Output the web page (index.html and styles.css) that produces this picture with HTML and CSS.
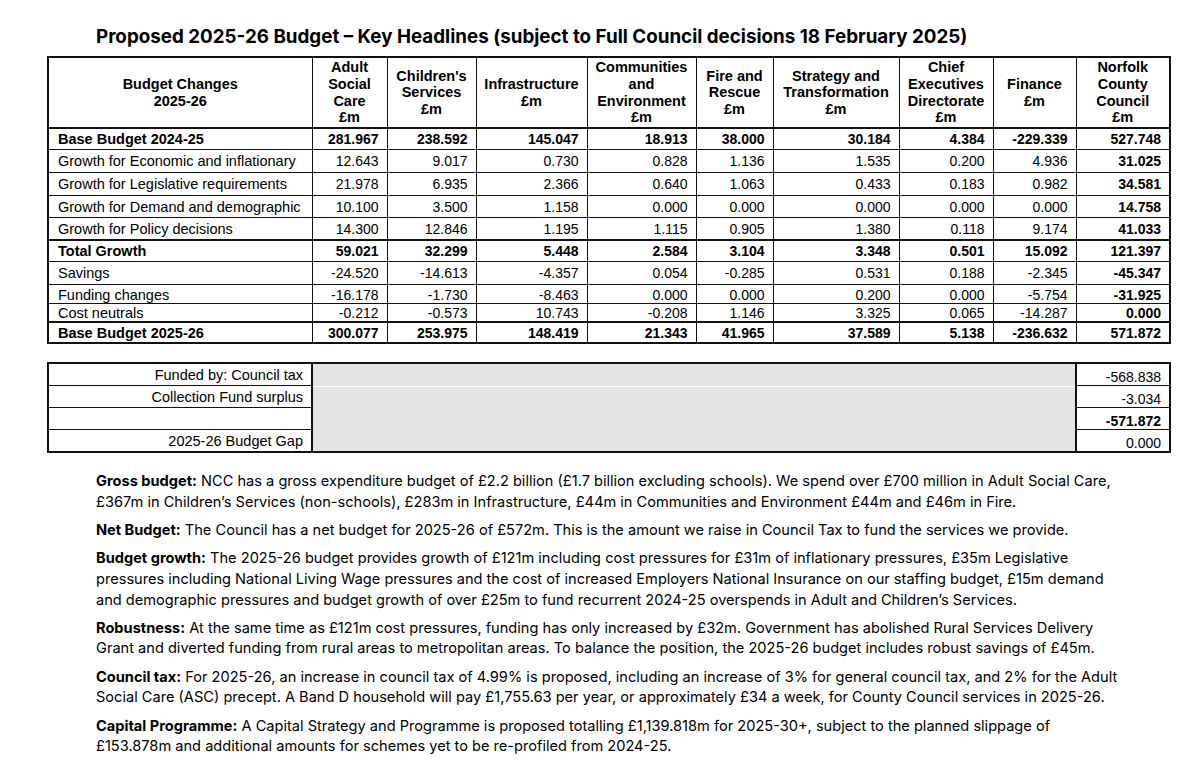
FILE: index.html
```html
<!DOCTYPE html>
<html lang="en">
<head>
<meta charset="utf-8">
<title>Proposed 2025-26 Budget – Key Headlines</title>
<link rel="stylesheet" href="styles.css">
</head>
<body>
<div class="page">
  <h1 class="title">Proposed 2025-26 Budget – Key Headlines (subject to Full Council decisions 18 February 2025)</h1>

  <table class="budget">
    <colgroup>
      <col class="c-label">
      <col class="c-asc">
      <col class="c-cs">
      <col class="c-inf">
      <col class="c-ce">
      <col class="c-fr">
      <col class="c-st">
      <col class="c-cx">
      <col class="c-fin">
      <col class="c-ncc">
    </colgroup>
    <thead>
      <tr>
        <th>Budget Changes<br>2025-26</th>
        <th>Adult<br>Social<br>Care<br>£m</th>
        <th>Children's<br>Services<br>£m</th>
        <th>Infrastructure<br>£m</th>
        <th>Communities<br>and<br>Environment<br>£m</th>
        <th>Fire and<br>Rescue<br>£m</th>
        <th>Strategy and<br>Transformation<br>£m</th>
        <th>Chief<br>Executives<br>Directorate<br>£m</th>
        <th>Finance<br>£m</th>
        <th>Norfolk<br>County<br>Council<br>£m</th>
      </tr>
    </thead>
    <tbody>
      <tr class="row bold h-base">
        <td>Base Budget 2024-25</td><td>281.967</td><td>238.592</td><td>145.047</td><td>18.913</td><td>38.000</td><td>30.184</td><td>4.384</td><td>-229.339</td><td>527.748</td>
      </tr>
      <tr class="row h23">
        <td>Growth for Economic and inflationary</td><td>12.643</td><td>9.017</td><td>0.730</td><td>0.828</td><td>1.136</td><td>1.535</td><td>0.200</td><td>4.936</td><td class="tot">31.025</td>
      </tr>
      <tr class="row h23">
        <td>Growth for Legislative requirements</td><td>21.978</td><td>6.935</td><td>2.366</td><td>0.640</td><td>1.063</td><td>0.433</td><td>0.183</td><td>0.982</td><td class="tot">34.581</td>
      </tr>
      <tr class="row h22">
        <td>Growth for Demand and demographic</td><td>10.100</td><td>3.500</td><td>1.158</td><td>0.000</td><td>0.000</td><td>0.000</td><td>0.000</td><td>0.000</td><td class="tot">14.758</td>
      </tr>
      <tr class="row h22">
        <td>Growth for Policy decisions</td><td>14.300</td><td>12.846</td><td>1.195</td><td>1.115</td><td>0.905</td><td>1.380</td><td>0.118</td><td>9.174</td><td class="tot">41.033</td>
      </tr>
      <tr class="row bold h-total">
        <td>Total Growth</td><td>59.021</td><td>32.299</td><td>5.448</td><td>2.584</td><td>3.104</td><td>3.348</td><td>0.501</td><td>15.092</td><td>121.397</td>
      </tr>
      <tr class="row h23">
        <td>Savings</td><td>-24.520</td><td>-14.613</td><td>-4.357</td><td>0.054</td><td>-0.285</td><td>0.531</td><td>0.188</td><td>-2.345</td><td class="tot">-45.347</td>
      </tr>
      <tr class="row low h19">
        <td>Funding changes</td><td>-16.178</td><td>-1.730</td><td>-8.463</td><td>0.000</td><td>0.000</td><td>0.200</td><td>0.000</td><td>-5.754</td><td class="tot">-31.925</td>
      </tr>
      <tr class="row low h18">
        <td>Cost neutrals</td><td>-0.212</td><td>-0.573</td><td>10.743</td><td>-0.208</td><td>1.146</td><td>3.325</td><td>0.065</td><td>-14.287</td><td class="tot">0.000</td>
      </tr>
      <tr class="row bold h-end">
        <td>Base Budget 2025-26</td><td>300.077</td><td>253.975</td><td>148.419</td><td>21.343</td><td>41.965</td><td>37.589</td><td>5.138</td><td>-236.632</td><td>571.872</td>
      </tr>
    </tbody>
  </table>

  <table class="funding">
    <colgroup>
      <col class="f-label">
      <col class="f-fill">
      <col class="f-val">
    </colgroup>
    <tbody>
      <tr>
        <td class="f-name">Funded by: Council tax</td><td class="f-grey"></td><td class="f-num">-568.838</td>
      </tr>
      <tr>
        <td class="f-name">Collection Fund surplus</td><td class="f-grey split"></td><td class="f-num">-3.034</td>
      </tr>
      <tr>
        <td class="f-name"></td><td class="f-grey"></td><td class="f-num strong">-571.872</td>
      </tr>
      <tr>
        <td class="f-name">2025-26 Budget Gap</td><td class="f-grey"></td><td class="f-num">0.000</td>
      </tr>
    </tbody>
  </table>

  <div class="notes">
    <p><b>Gross budget:</b> NCC has a gross expenditure budget of £2.2 billion (£1.7 billion excluding schools). We spend over £700 million in Adult Social Care, £367m in Children’s Services (non-schools), £283m in Infrastructure, £44m in Communities and Environment £44m and £46m in Fire.</p>
    <p><b>Net Budget:</b> The Council has a net budget for 2025-26 of £572m. This is the amount we raise in Council Tax to fund the services we provide.</p>
    <p><b>Budget growth:</b> The 2025-26 budget provides growth of £121m including cost pressures for £31m of inflationary pressures, £35m Legislative pressures including National Living Wage pressures and the cost of increased Employers National Insurance on our staffing budget, £15m demand and demographic pressures and budget growth of over £25m to fund recurrent 2024-25 overspends in Adult and Children’s Services.</p>
    <p><b>Robustness:</b> At the same time as £121m cost pressures, funding has only increased by £32m. Government has abolished Rural Services Delivery Grant and diverted funding from rural areas to metropolitan areas. To balance the position, the 2025-26 budget includes robust savings of £45m.</p>
    <p><b>Council tax:</b> For 2025-26, an increase in council tax of 4.99% is proposed, including an increase of 3% for general council tax, and 2% for the Adult Social Care (ASC) precept. A Band D household will pay £1,755.63 per year, or approximately £34 a week, for County Council services in 2025-26.</p>
    <p><b>Capital Programme:</b> A Capital Strategy and Programme is proposed totalling £1,139.818m for 2025-30+, subject to the planned slippage of £153.878m and additional amounts for schemes yet to be re-profiled from 2024-25.</p>
  </div>
</div>
</body>
</html>
```

FILE: styles.css
```css
html, body {
  margin: 0;
  padding: 0;
  background: #ffffff;
  color: #000000;
}

.page {
  padding: 26px 0 0 47px;
  width: 1122px;
}

.title {
  margin: 0 0 8px 49px;
  font-family: "Inter", "Liberation Sans", sans-serif;
  font-weight: 700;
  font-size: 18.8px;
  line-height: 22px;
  letter-spacing: 0;
  white-space: nowrap;
}

/* main budget table */
.budget {
  width: 1122px;
  border-collapse: collapse;
  table-layout: fixed;
  border: 2px solid #111;
  font-family: "Liberation Sans", Arial, sans-serif;
  color: #000;
}

.c-label { width: 264px; }
.c-asc { width: 75px; }
.c-cs { width: 89px; }
.c-inf { width: 111px; }
.c-ce { width: 109px; }
.c-fr { width: 77px; }
.c-st { width: 126px; }
.c-cx { width: 94px; }
.c-fin { width: 83px; }
.c-ncc { width: 94px; }

.budget th {
  height: 69px;
  padding: 0 2px;
  font-size: 14.5px;
  line-height: 16.6px;
  font-weight: 700;
  text-align: center;
  vertical-align: middle;
  border: 1px solid #111;
  border-bottom-width: 2px;
  overflow: hidden;
}

.budget td {
  padding: 0 8px 0 9px;
  font-size: 14px;
  line-height: 16px;
  text-align: right;
  vertical-align: middle;
  border: 1px solid #111;
  white-space: nowrap;
}

.budget td:first-child {
  text-align: left;
  font-size: 14.5px;
}

.budget .bold td,
.budget td.tot {
  font-weight: 700;
}

.budget .bold td {
  border-top-width: 2px;
}

.budget .h-base td { height: 20px; }
.budget .h23 td { height: 22px; }
.budget .h22 td { height: 21px; }
.budget .h-total td { height: 20px; }
.budget .h19 td { height: 18px; }
.budget .h18 td { height: 17px; }
.budget .h-end td { height: 19px; }

.budget .low td {
  vertical-align: bottom;
  line-height: 15px;
}

/* funding table */
.funding {
  margin-top: 18px;
  width: 1122px;
  border-collapse: collapse;
  table-layout: fixed;
  border: 2px solid #111;
  font-family: "Liberation Sans", Arial, sans-serif;
  font-size: 14px;
}

.f-label { width: 264px; }
.f-fill { width: 764px; }
.f-val { width: 94px; }

.funding td {
  height: 21px;
  padding: 0;
  line-height: 16px;
  white-space: nowrap;
}

.funding .f-name {
  text-align: right;
  padding-right: 8px;
  border: 1px solid #111;
  border-right-width: 2px;
  font-size: 14.5px;
}

.funding .f-grey {
  background: #e4e4e4;
  border-top: 0;
  border-bottom: 0;
}

.funding .f-grey.split {
  box-shadow: inset 0 1px 0 #ffffff;
}

.funding .f-num {
  text-align: right;
  vertical-align: bottom;
  padding-right: 8px;
  border: 1px solid #111;
  border-left-width: 2px;
}

.funding .f-num.strong {
  font-weight: 700;
}

/* notes */
.notes {
  margin: 18px 0 0 49px;
  width: 1030px;
  font-family: "Inter", "Liberation Sans", sans-serif;
  font-size: 14.6px;
  line-height: 20.7px;
}

.notes p {
  margin: 0 0 7.5px 0;
}

.notes b {
  font-weight: 700;
}
```
